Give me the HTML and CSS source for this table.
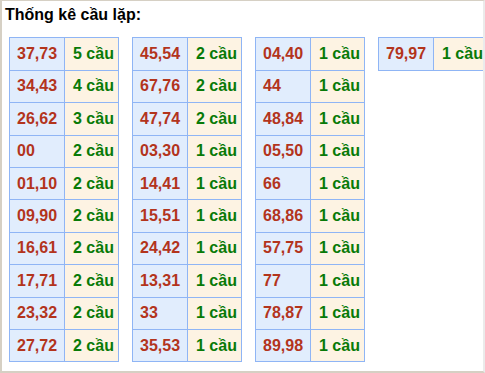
FILE: index.html
```html
<!DOCTYPE html>
<html lang="vi">
<head>
<meta charset="utf-8">
<title>Thống kê cầu lặp</title>
<link rel="stylesheet" href="styles.css">
</head>
<body>
<div class="frame">
  <div class="title">Thống kê cầu lặp:</div>
  <div class="tables">
    <table class="tk">
      <tr><td class="num">37,73</td><td class="cau">5 cầu</td></tr>
      <tr><td class="num">34,43</td><td class="cau">4 cầu</td></tr>
      <tr><td class="num">26,62</td><td class="cau">3 cầu</td></tr>
      <tr><td class="num">00</td><td class="cau">2 cầu</td></tr>
      <tr><td class="num">01,10</td><td class="cau">2 cầu</td></tr>
      <tr><td class="num">09,90</td><td class="cau">2 cầu</td></tr>
      <tr><td class="num">16,61</td><td class="cau">2 cầu</td></tr>
      <tr><td class="num">17,71</td><td class="cau">2 cầu</td></tr>
      <tr><td class="num">23,32</td><td class="cau">2 cầu</td></tr>
      <tr><td class="num">27,72</td><td class="cau">2 cầu</td></tr>
    </table>
    <table class="tk">
      <tr><td class="num">45,54</td><td class="cau">2 cầu</td></tr>
      <tr><td class="num">67,76</td><td class="cau">2 cầu</td></tr>
      <tr><td class="num">47,74</td><td class="cau">2 cầu</td></tr>
      <tr><td class="num">03,30</td><td class="cau">1 cầu</td></tr>
      <tr><td class="num">14,41</td><td class="cau">1 cầu</td></tr>
      <tr><td class="num">15,51</td><td class="cau">1 cầu</td></tr>
      <tr><td class="num">24,42</td><td class="cau">1 cầu</td></tr>
      <tr><td class="num">13,31</td><td class="cau">1 cầu</td></tr>
      <tr><td class="num">33</td><td class="cau">1 cầu</td></tr>
      <tr><td class="num">35,53</td><td class="cau">1 cầu</td></tr>
    </table>
    <table class="tk">
      <tr><td class="num">04,40</td><td class="cau">1 cầu</td></tr>
      <tr><td class="num">44</td><td class="cau">1 cầu</td></tr>
      <tr><td class="num">48,84</td><td class="cau">1 cầu</td></tr>
      <tr><td class="num">05,50</td><td class="cau">1 cầu</td></tr>
      <tr><td class="num">66</td><td class="cau">1 cầu</td></tr>
      <tr><td class="num">68,86</td><td class="cau">1 cầu</td></tr>
      <tr><td class="num">57,75</td><td class="cau">1 cầu</td></tr>
      <tr><td class="num">77</td><td class="cau">1 cầu</td></tr>
      <tr><td class="num">78,87</td><td class="cau">1 cầu</td></tr>
      <tr><td class="num">89,98</td><td class="cau">1 cầu</td></tr>
    </table>
    <table class="tk">
      <tr><td class="num">79,97</td><td class="cau">1 cầu</td></tr>
    </table>
  </div>
</div>
</body>
</html>
```
FILE: styles.css
```css
html, body {
  margin: 0;
  padding: 0;
  background: #ffffff;
}
.frame {
  box-sizing: border-box;
  width: 485px;
  height: 373px;
  overflow: hidden;
  background: #ffffff;
  border-top: 1px solid #d6d0c4;
  border-left: 2px solid #d6d0c4;
  border-bottom: 2px solid #d6d0c4;
  border-right: 2px solid #ebebeb;
  padding: 5px 0 0 3px;
  font-family: "Liberation Sans", Arial, sans-serif;
}
.title {
  font-size: 16px;
  font-weight: bold;
  color: #000000;
  line-height: 18.4px;
}
.tables {
  display: flex;
  align-items: flex-start;
  gap: 13px;
  margin-top: 13px;
  padding-left: 4px;
}
.tk {
  flex: none;
  border-collapse: collapse;
  table-layout: fixed;
  width: 110px;
  font-size: 16px;
  font-weight: bold;
}
.tk td {
  border: 1px solid #8fb5f5;
  padding: 6.5px 0 6.5px 7px;
  line-height: 18.4px;
  white-space: nowrap;
  text-align: left;
}
.tk td.num {
  width: 47px;
  background: #e1edfd;
  color: #b3341c;
}
.tk td.cau {
  background: #fdf3e3;
  color: #087a08;
  padding-left: 8px;
}
```
